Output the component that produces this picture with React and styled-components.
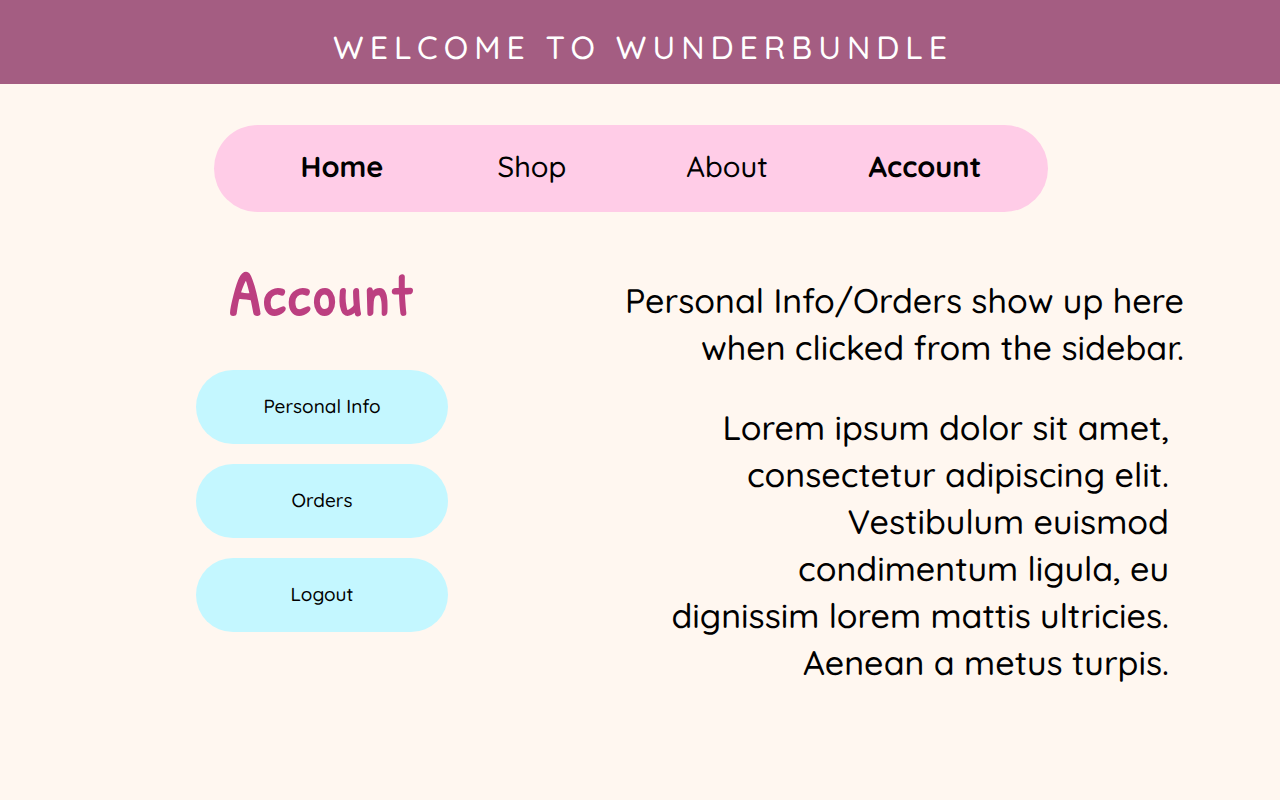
import React from 'react';
import styled, { createGlobalStyle } from 'styled-components';

const GlobalStyle = createGlobalStyle`
  * { box-sizing: border-box; }
  body {
    margin: 0;
    background: #fff7f0;
    color: #000;
    font-family: Quicksand, Lato, sans-serif;
    font-weight: 520;
    text-rendering: geometricPrecision;
  }
`;

const Banner = styled.header`
  padding: 23px 16px 13px 22px;
  background: #a45d82;
  text-align: center;
`;

const BannerTitle = styled.h1`
  margin: 0;
  color: #fff;
  font-size: 32px;
  line-height: 48px;
  font-weight: 550;
  letter-spacing: 6px;
  text-transform: uppercase;
`;

const NavBar = styled.nav`
  display: grid;
  grid-template-columns: 96fr 94fr 101fr 97fr;
  align-items: center;
  margin: 41px 232px 0 214px;
  padding: 21px 26px 24px 32px;
  border-radius: 44px;
  background: #ffcce7;
`;

const NavLink = styled.a`
  color: #000;
  font-size: 29px;
  line-height: 42px;
  font-weight: ${(p) => (p.$strong ? 700 : 550)};
  text-align: center;
  text-decoration: none;
`;

const Page = styled.main`
  display: grid;
  grid-template-columns: 252px 1fr;
  column-gap: 160px;
  padding: 50px 96px 40px 196px;
`;

const Sidebar = styled.aside`
  display: flex;
  flex-direction: column;
  gap: 20px;
`;

const SidebarTitle = styled.h2`
  margin: 0 0 24px;
  color: #bc3f80;
  font-family: "Patrick Hand", Chewy, "Gochi Hand", Quicksand, sans-serif;
  font-size: 56px;
  line-height: 60px;
  font-weight: 700;
  letter-spacing: 3px;
  text-align: center;

  &::first-letter {
    font-size: 64px;
    line-height: 60px;
  }
`;

const SidebarButton = styled.button`
  width: 100%;
  height: 74px;
  padding: 0 16px 2px;
  border: 0;
  border-radius: 37px;
  background: #c4f7ff;
  color: #000;
  font-family: inherit;
  font-size: 19px;
  line-height: 26px;
  font-weight: inherit;
  text-rendering: inherit;
  cursor: pointer;
`;

const Content = styled.section`
  padding-top: 15px;
  text-align: right;
`;

const Paragraph = styled.p`
  margin: 0;
  font-size: 34px;
  line-height: 47px;
`;

const Details = styled(Paragraph)`
  margin-top: 33px;
  padding-right: 15px;
`;

const links = [
  { label: 'Home', strong: true },
  { label: 'Shop' },
  { label: 'About' },
  { label: 'Account', strong: true },
];

const actions = ['Personal Info', 'Orders', 'Logout'];

export default function App() {
  return (
    <>
      <GlobalStyle />
      <Banner>
        <BannerTitle>Welcome to Wunderbundle</BannerTitle>
      </Banner>
      <NavBar aria-label="Main">
        {links.map(({ label, strong }) => (
          <NavLink key={label} href={`#${label.toLowerCase()}`} $strong={strong}>
            {label}
          </NavLink>
        ))}
      </NavBar>
      <Page>
        <Sidebar>
          <SidebarTitle>Account</SidebarTitle>
          {actions.map((label) => (
            <SidebarButton key={label} type="button">{label}</SidebarButton>
          ))}
        </Sidebar>
        <Content>
          <Paragraph>
            Personal Info/Orders show up here<br />
            when clicked from the sidebar.
          </Paragraph>
          <Details>
            Lorem ipsum dolor sit amet,<br />
            consectetur adipiscing elit.<br />
            Vestibulum euismod<br />
            condimentum ligula, eu<br />
            dignissim lorem mattis ultricies.<br />
            Aenean a metus turpis.
          </Details>
        </Content>
      </Page>
    </>
  );
}
